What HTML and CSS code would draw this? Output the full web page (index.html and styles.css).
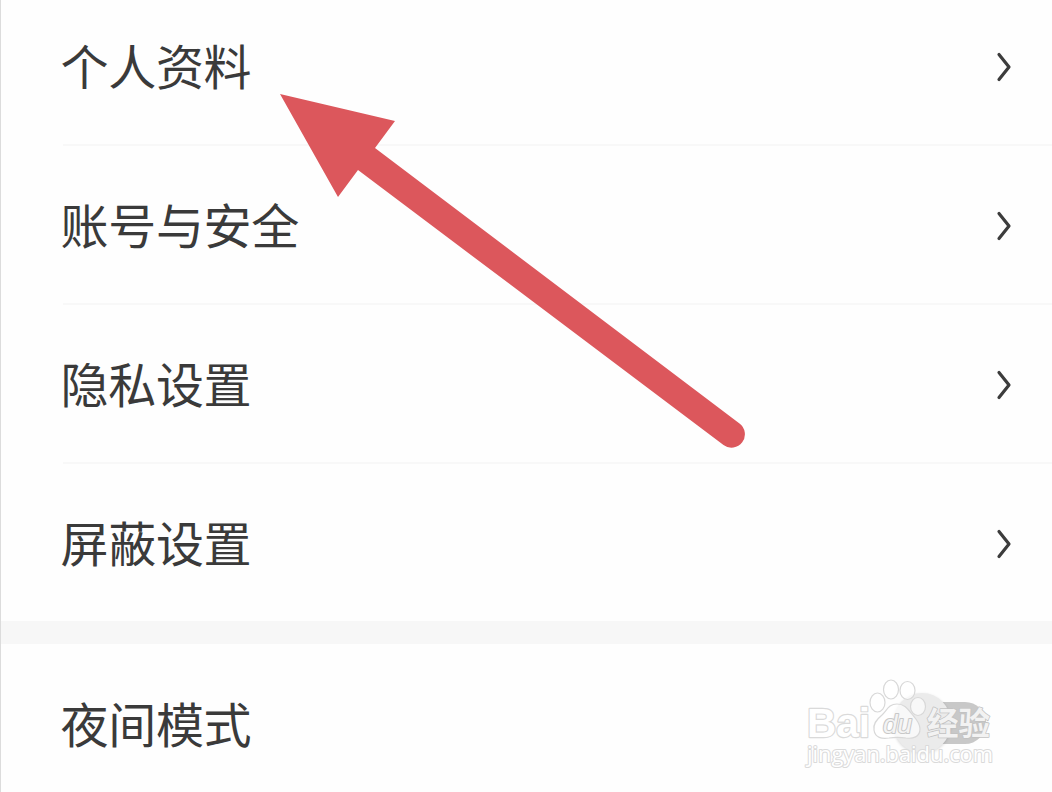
FILE: index.html
```html
<!DOCTYPE html>
<html lang="zh-CN">
<head>
  <meta charset="UTF-8" />
  <meta name="viewport" content="width=device-width, initial-scale=1.0"/>
  <title>设置</title>
  <link rel="stylesheet" href="styles.css">
</head>
<body>

<div class="page">
  <div class="group">
    <div class="row">
      <span class="label">个人资料</span>
      <svg class="chevron" viewBox="0 0 16 32"><path d="M3 3.5L13 16L3 28.5"/></svg>
    </div>
    <div class="row">
      <span class="label">账号与安全</span>
      <svg class="chevron" viewBox="0 0 16 32"><path d="M3 3.5L13 16L3 28.5"/></svg>
    </div>
    <div class="row">
      <span class="label">隐私设置</span>
      <svg class="chevron" viewBox="0 0 16 32"><path d="M3 3.5L13 16L3 28.5"/></svg>
    </div>
    <div class="row last">
      <span class="label">屏蔽设置</span>
      <svg class="chevron" viewBox="0 0 16 32"><path d="M3 3.5L13 16L3 28.5"/></svg>
    </div>
  </div>

  <div class="divider"></div>

  <div class="row night">
    <span class="label">夜间模式</span>
    <div class="switch"><div class="knob"></div></div>
  </div>
</div>

<svg class="arrow" viewBox="0 0 1052 792">
  <path d="M280 94L395 121L375 148L739.5 423.5A13.3 13.3 0 0 1 723.5 445L358 170L338 197Z"/>
</svg>

<svg class="watermark" viewBox="0 0 220 110">
  <g class="paw">
    <ellipse cx="87.5" cy="32.5" rx="7.5" ry="9.5"/>
    <ellipse cx="101" cy="19.5" rx="7.5" ry="9.5"/>
    <ellipse cx="117.5" cy="20.5" rx="7.5" ry="9"/>
    <ellipse cx="128" cy="36.5" rx="7.5" ry="9"/>
    <path d="M107 34C99 34 97 40 92 45C86 50 83 54 84 60C85 68 92 69 99 68C105 67 110 67 116 68C123 69 130 67 130 59C130 52 125 48 121 43C117 38 114 34 107 34Z"/>
  </g>
  <text class="brand" x="17" y="67" textLength="63" lengthAdjust="spacingAndGlyphs">Bai</text>
  <text class="du" x="93" y="63" textLength="29" lengthAdjust="spacingAndGlyphs">du</text>
  <text class="jingyan" x="137" y="64.5" textLength="63" lengthAdjust="spacingAndGlyphs">经验</text>
  <text class="site" x="17" y="92" textLength="186" lengthAdjust="spacingAndGlyphs">jingyan.baidu.com</text>
</svg>

</body>
</html>
```
FILE: styles.css
```css
body {
  margin: 0;
  height: 792px;
  overflow: hidden;
  position: relative;
  background: #fefefe;
  font-family: "Noto Sans CJK SC", sans-serif;
}

.page {
  box-sizing: border-box;
  height: 792px;
  border-left: 1px solid #dcdcdc;
  overflow: hidden;
}

.group {
  margin-top: -13px;
}

.row {
  box-sizing: border-box;
  height: 159px;
  margin-left: 62px;
  padding-right: 40px;
  border-bottom: 2px solid #f8f8f8;
  display: flex;
  align-items: center;
  justify-content: space-between;
}

.row.last {
  height: 157px;
  border-bottom: none;
}

.row.night {
  border-bottom: none;
  padding-right: 66px;
}

.label {
  margin-left: -2.5px;
  padding-bottom: 4px;
  font-size: 48px;
  line-height: 70px;
  letter-spacing: -0.3px;
  color: #3a3a3a;
}

.chevron {
  width: 16px;
  height: 32px;
  padding-top: 2px;
  fill: none;
  stroke: #3c3c3c;
  stroke-width: 3.2;
  stroke-linecap: round;
  stroke-linejoin: round;
}

.divider {
  height: 23px;
  background: #f7f7f7;
}

.switch {
  width: 80px;
  height: 42px;
  margin-bottom: 2px;
  border-radius: 21px;
  background: #c8c8c8;
  display: flex;
  align-items: center;
}

.knob {
  flex: none;
  width: 58px;
  height: 60px;
  margin-left: -13px;
  border-radius: 50%;
  background: #ebebeb;
  box-shadow: 0 1px 3px rgba(0,0,0,0.15);
}

.arrow {
  position: absolute;
  left: 0;
  top: 0;
  width: 1052px;
  height: 792px;
  fill: #dc575c;
}

.watermark {
  position: absolute;
  left: 790px;
  top: 670px;
  width: 220px;
  height: 110px;
}

.paw {
  fill: rgba(255,255,255,0.65);
  stroke: #d8d8d8;
  stroke-width: 1.2;
}

.watermark text {
  fill: #fff;
  stroke: #dadada;
  stroke-width: 2.4;
  stroke-linejoin: round;
  paint-order: stroke;
}

.brand {
  font: bold 41px/1 "Liberation Sans", sans-serif;
}

.watermark .du {
  font: italic 25px "Liberation Sans", sans-serif;
  fill: #f4f4f4;
  stroke: #c8c8c8;
  stroke-width: 2;
}

.watermark .jingyan {
  font: bold 32px "Noto Sans CJK SC", sans-serif;
  fill: #f2f2f2;
  stroke: #c2c2c2;
  stroke-width: 1.6;
}

.watermark .site {
  font: 21px "Open Sans", sans-serif;
  stroke-width: 2;
}
```
